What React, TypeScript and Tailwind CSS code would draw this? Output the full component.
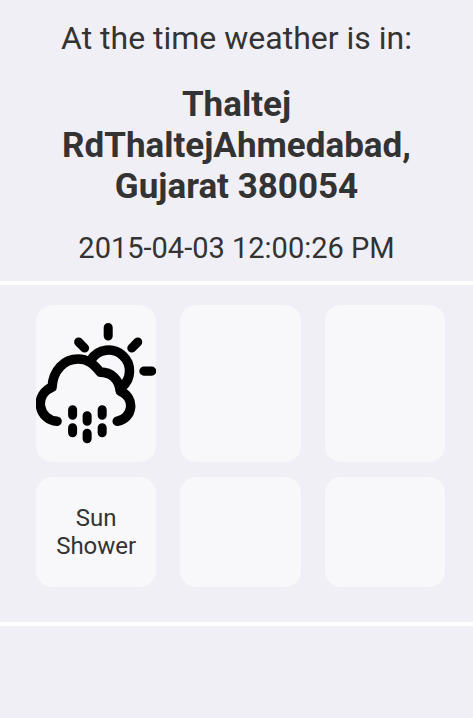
interface ForecastTileProps {
  icon?: React.ReactNode
  label?: string
}

const forecast: ForecastTileProps[] = [
  { icon: <SunShowerIcon />, label: 'Sun Shower' },
  {},
  {},
]

function SunShowerIcon() {
  return (
    <svg
      viewBox="0 0 120 120"
      className="w-full"
      fill="none"
      stroke="#000"
      strokeWidth="9"
      strokeLinecap="round"
      strokeLinejoin="round"
      role="img"
      aria-label="Sun shower"
    >
      {/* sun */}
      <path d="M72 4.5V13M42.5 19L48.5 25M101.5 19L95.5 25M107.5 48H115.5" />
      <path d="M55 36.5A20.8 20.8 0 1 1 85.5 64" strokeWidth="9.5" />
      {/* cloud */}
      <path
        d="M21 98A17.5 17.5 0 0 1 16 64C17 47 28 36 42 36C51 36 57 40 64 49C75 49 83 56 84 68A15.5 15.5 0 0 1 81 98"
        strokeWidth="9.5"
      />
      {/* rain */}
      <path d="M36.5 86.5V92M36.5 104.5V109.5M51 92.5V98M51 110V115.5M66 86.5V92M66 104.5V109.5" />
    </svg>
  )
}

export default function App() {
  return (
    <main className="min-h-screen bg-[#f0eff5] font-[Roboto,sans-serif] text-[#333333]">
      <header className="flex flex-col items-center border-b-4 border-white px-10 pt-5 pb-4 text-center">
        <p className="text-[32px] leading-9">At the time weather is in:</p>
        <h1 className="mt-7 text-[35px] leading-[41px] font-bold">
          Thaltej RdThaltejAhmedabad, Gujarat 380054
        </h1>
        <p className="mt-6 text-[29px] leading-[34px]">2015-04-03 12:00:26 PM</p>
      </header>

      <section className="grid grid-cols-3 gap-x-6 gap-y-[15px] border-b-4 border-white pt-5 pr-7 pb-[35px] pl-9">
        {forecast.map((tile, i) => (
          <div
            key={i}
            className="flex min-h-[157px] items-center justify-center rounded-2xl bg-[#f8f8fa]"
          >
            {tile.icon}
          </div>
        ))}
        {forecast.map((tile, i) => (
          <div
            key={i}
            className="flex min-h-[110px] items-center justify-center rounded-2xl bg-[#f8f8fa] px-4 text-center text-[24px] leading-7"
          >
            {tile.label}
          </div>
        ))}
      </section>
    </main>
  )
}
